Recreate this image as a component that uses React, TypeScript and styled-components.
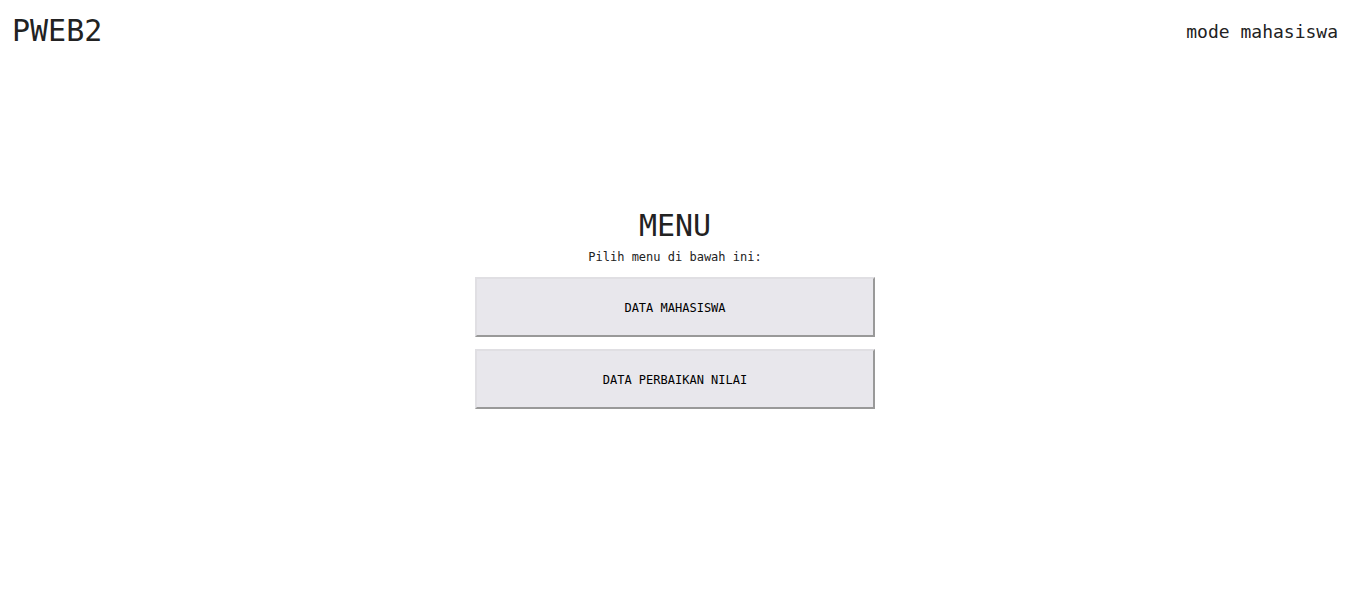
import styled, { createGlobalStyle } from 'styled-components';

const GlobalStyle = createGlobalStyle`
  * {
    box-sizing: border-box;
  }
  body {
    margin: 0;
    background: #ffffff;
    color: #222222;
    font-family: 'DejaVu Sans Mono', monospace;
  }
`;

const menus = ['DATA MAHASISWA', 'DATA PERBAIKAN NILAI'];

const App = () => {
  return (
    <>
      <GlobalStyle />
      <Page>
        <Header>
          <Brand>PWEB2</Brand>
          <Mode>mode mahasiswa</Mode>
        </Header>
        <Main>
          <Title>MENU</Title>
          <Subtitle>Pilih menu di bawah ini:</Subtitle>
          <MenuList>
            {menus.map((m) => (
              <MenuButton key={m}>{m}</MenuButton>
            ))}
          </MenuList>
        </Main>
      </Page>
    </>
  );
};
export default App;

const Page = styled.div`
  position: relative;
  height: 100vh;
`;

// header sits over the centred menu
const Header = styled.header`
  position: absolute;
  top: 0;
  left: 0;
  right: 0;
  display: flex;
  justify-content: space-between;
  align-items: center;
  padding: 12px 12px 0 12px;
`;

const Brand = styled.h1`
  margin: 0;
  font-size: 30px;
  font-weight: normal;
  line-height: 38px;
`;

const Mode = styled.span`
  font-size: 18px;
  line-height: 37px;
`;

const Main = styled.main`
  height: 100%;
  padding-top: 3px;
  display: flex;
  flex-direction: column;
  align-items: center;
  justify-content: center;
`;

const Title = styled.h2`
  margin: 0;
  font-size: 30px;
  font-weight: normal;
  line-height: 36px;
`;

const Subtitle = styled.p`
  margin: 6px 0 13px;
  font-size: 12px;
  line-height: 14px;
`;

const MenuList = styled.div`
  display: flex;
  flex-direction: column;
  gap: 12px;
`;

const MenuButton = styled.button`
  width: 400px;
  height: 60px;
  padding: 2px 0 0;
  background: #e8e7ec;
  border: 2px solid;
  border-color: #e0dfe3 #999999 #999999 #e0dfe3;
  color: #000000;
  font-family: 'DejaVu Sans Mono', monospace;
  font-size: 12px;
  cursor: pointer;
`;
